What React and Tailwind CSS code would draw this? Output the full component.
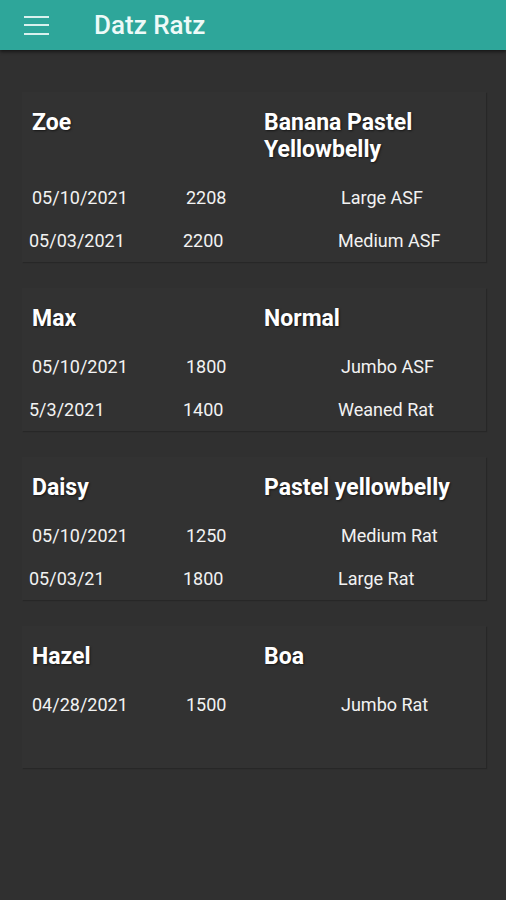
import React from 'react';

const snakes = [
  {
    name: 'Zoe',
    morph: 'Banana Pastel Yellowbelly',
    feedings: [
      { date: '05/10/2021', weight: '2208', prey: 'Large ASF' },
      { date: '05/03/2021', weight: '2200', prey: 'Medium ASF' },
    ],
  },
  {
    name: 'Max',
    morph: 'Normal',
    feedings: [
      { date: '05/10/2021', weight: '1800', prey: 'Jumbo ASF' },
      { date: '5/3/2021', weight: '1400', prey: 'Weaned Rat' },
    ],
  },
  {
    name: 'Daisy',
    morph: 'Pastel yellowbelly',
    feedings: [
      { date: '05/10/2021', weight: '1250', prey: 'Medium Rat' },
      { date: '05/03/21', weight: '1800', prey: 'Large Rat' },
    ],
  },
  {
    name: 'Hazel',
    morph: 'Boa',
    feedings: [{ date: '04/28/2021', weight: '1500', prey: 'Jumbo Rat' }],
  },
];

const SnakeCard = ({ snake }) => (
  <div className="min-h-[142px] bg-[#323232] px-[10px] pt-[17px] shadow-[1px_1px_1px_rgba(0,0,0,0.18)]">
    <div className="flex text-[23px] font-bold leading-[27px] text-white [text-shadow:1px_1px_2px_rgba(0,0,0,0.55)]">
      <div className="w-[232px] shrink-0">{snake.name}</div>
      <div className="flex-1 pr-4">{snake.morph}</div>
    </div>
    <div className="mt-[13px] flex flex-col">
      {snake.feedings.map((f, i) => (
        <div
          key={i}
          className={
            i === 0
              ? 'flex h-[43px] items-center text-[18px] text-[#f2f2f2]'
              : 'flex h-[43px] items-center text-[18px] text-[#f2f2f2] -ml-[3px]'
          }
        >
          <div className="w-[154px] shrink-0">{f.date}</div>
          <div className="w-[155px] shrink-0">{f.weight}</div>
          <div>{f.prey}</div>
        </div>
      ))}
    </div>
  </div>
);

export default function App() {
  return (
    <div className="min-h-[900px] bg-[#303030] font-['Roboto','Liberation_Sans',sans-serif]">
      <header className="flex h-[50px] items-center bg-[#2ea69a] shadow-[0_2px_3px_rgba(0,0,0,0.5)]">
        <button className="ml-[24px] flex h-[19px] w-[25px] flex-col justify-between">
          <span className="block h-[2px] w-full bg-[#d9f1ee]" />
          <span className="block h-[2px] w-full bg-[#d9f1ee]" />
          <span className="block h-[2px] w-full bg-[#d9f1ee]" />
        </button>
        <h1 className="ml-[45px] text-[26px] font-medium text-[#eefaf8]">Datz Ratz</h1>
      </header>

      <main className="flex flex-col gap-[26px] pl-[22px] pr-[20px] pt-[42px] pb-8 text-[#f2f2f2]">
        {snakes.map((s) => (
          <SnakeCard key={s.name} snake={s} />
        ))}
      </main>
    </div>
  );
}
